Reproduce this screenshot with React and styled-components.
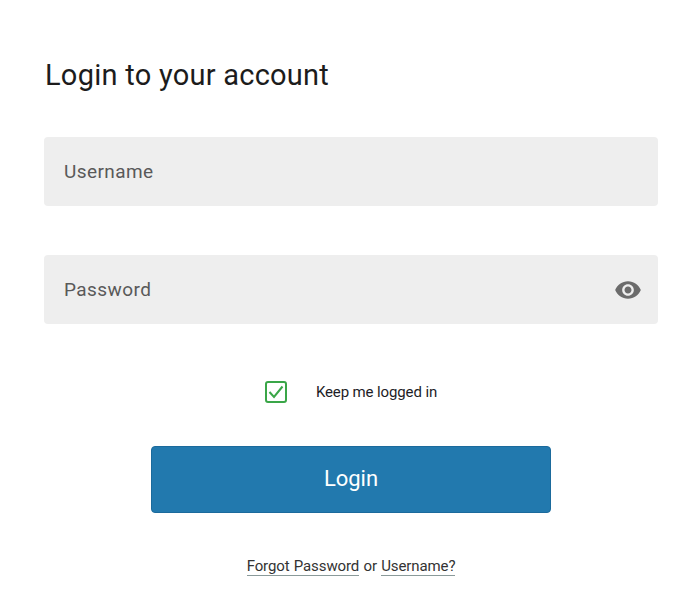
import React from 'react';
import styled, { createGlobalStyle } from 'styled-components';

const GlobalStyle = createGlobalStyle`
  html, body {
    margin: 0;
    padding: 0;
    background: #fff;
    font-family: Roboto, "Liberation Sans", sans-serif;
  }
`;

const Container = styled.form`
  width: 700px;
  height: 605px;
  box-sizing: border-box;
  padding: 56px 42px 0 44px;
  overflow: hidden;
`;

const Title = styled.h1`
  margin: 0 0 43px 1px;
  font-size: 29px;
  line-height: 38px;
  font-weight: 400;
  letter-spacing: 0.25px;
  color: #1c1c1c;
`;

const Field = styled.div`
  display: flex;
  align-items: center;
  justify-content: space-between;
  height: 69px;
  margin-bottom: 49px;
  padding: 0 16px 0 20px;
  box-sizing: border-box;
  background: #eeeeee;
  border-radius: 4px;
`;

const Input = styled.input`
  flex: 1;
  min-width: 0;
  padding: 0;
  border: none;
  outline: none;
  background: transparent;
  font-family: inherit;
  font-size: 19px;
  letter-spacing: 0.42px;
  color: #555;

  &::placeholder {
    color: #595959;
    opacity: 1;
  }
`;

const EyeButton = styled.button`
  display: flex;
  padding: 0;
  border: none;
  background: transparent;
  cursor: pointer;
`;

const KeepRow = styled.label`
  display: flex;
  align-items: center;
  justify-content: center;
  gap: 29px;
  margin: 56px 0 42px;
  font-size: 15px;
  line-height: 24px;
  letter-spacing: -0.12px;
  color: #1d1d26;
`;

const CheckBox = styled.span`
  display: flex;
  align-items: center;
  justify-content: center;
  width: 22px;
  height: 22px;
  box-sizing: border-box;
  border: 2px solid #3aa648;
  border-radius: 3px;
  color: #3aa648;
`;

const LoginButton = styled.button`
  display: block;
  width: 400px;
  height: 67px;
  margin: 0 0 0 107px;
  padding: 0 0 2px;
  border: 1px solid #1b6a9c;
  border-radius: 4px;
  background: #2279ae;
  color: #fff;
  font-family: inherit;
  font-size: 22px;
  cursor: pointer;
`;

const Help = styled.p`
  margin: 42px 0 0;
  text-align: center;
  font-size: 15px;
  line-height: 22px;
  letter-spacing: -0.1px;
  word-spacing: 0.6px;
  color: #333;
`;

const HelpLink = styled.a`
  color: #333;
  text-decoration: none;
  border-bottom: 1px solid #8a9a9a;
`;

const App = () => (
  <>
    <GlobalStyle />
    <Container onSubmit={e => e.preventDefault()}>
      <Title>Login to your account</Title>
      <Field>
        <Input placeholder="Username" />
      </Field>
      <Field>
        <Input type="password" placeholder="Password" />
        <EyeButton type="button" aria-label="Show password">
          <svg width="28" height="28" viewBox="0 0 24 24" fill="#6b6b6b">
            <path d="M12 4.5C7 4.5 2.73 7.61 1 12c1.73 4.39 6 7.5 11 7.5s9.27-3.11 11-7.5c-1.73-4.39-6-7.5-11-7.5zM12 17c-2.76 0-5-2.24-5-5s2.24-5 5-5 5 2.24 5 5-2.24 5-5 5zm0-8c-1.66 0-3 1.34-3 3s1.34 3 3 3 3-1.34 3-3-1.34-3-3-3z" />
          </svg>
        </EyeButton>
      </Field>
      <KeepRow>
        <CheckBox>
          <svg width="16" height="14" viewBox="0 0 16 14" fill="none" stroke="currentColor" strokeWidth="2">
            <path d="M1.5 7 L6 12 L14.5 1.5" />
          </svg>
        </CheckBox>
        Keep me logged in
      </KeepRow>
      <LoginButton type="submit">Login</LoginButton>
      <Help>
        <HelpLink href="#forgot">Forgot Password</HelpLink> or <HelpLink href="#username">Username?</HelpLink>
      </Help>
    </Container>
  </>
);

export default App;
